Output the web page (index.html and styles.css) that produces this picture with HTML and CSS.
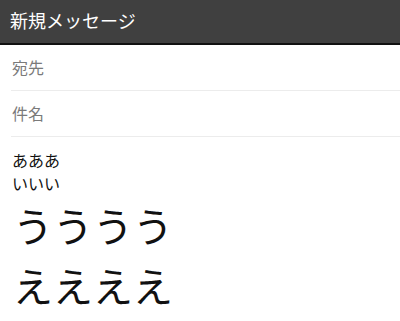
FILE: index.html
```html
<!DOCTYPE html>
<html lang="ja">
<head>
    <meta charset="UTF-8">
    <meta name="viewport" content="width=device-width, initial-scale=1.0">
    <title>新規メッセージ</title>
    <link rel="stylesheet" href="styles.css">
</head>
<body>
    <div class="header">新規メッセージ</div>
    <div class="form">
        <div class="field">宛先</div>
        <div class="field">件名</div>
        <div class="message">
            <div class="small">あああ</div>
            <div class="small">いいい</div>
            <div class="big">うううう</div>
            <div class="big">ええええ</div>
        </div>
    </div>
</body>
</html>
```

FILE: styles.css
```css
body {
    margin: 0;
    background: #fff;
    font-family: "Noto Sans CJK JP", "Noto Sans", sans-serif;
    overflow: hidden;
}
.header {
    height: 43px;
    line-height: 41px;
    background: #404040;
    border-bottom: 2px solid #111;
    color: #fff;
    font-size: 18px;
    padding-left: 10px;
}
.form {
    padding-left: 11px;
}
.field {
    height: 45px;
    line-height: 45px;
    border-bottom: 1px solid #ececec;
    color: #7a7a7a;
    font-size: 16px;
    padding-left: 1px;
}
.message {
    padding-top: 12px;
    padding-left: 1px;
    color: #111;
}
.small {
    font-size: 16px;
    line-height: 23px;
}
.big {
    font-size: 40px;
    line-height: 60px;
    padding-left: 1px;
}
```
